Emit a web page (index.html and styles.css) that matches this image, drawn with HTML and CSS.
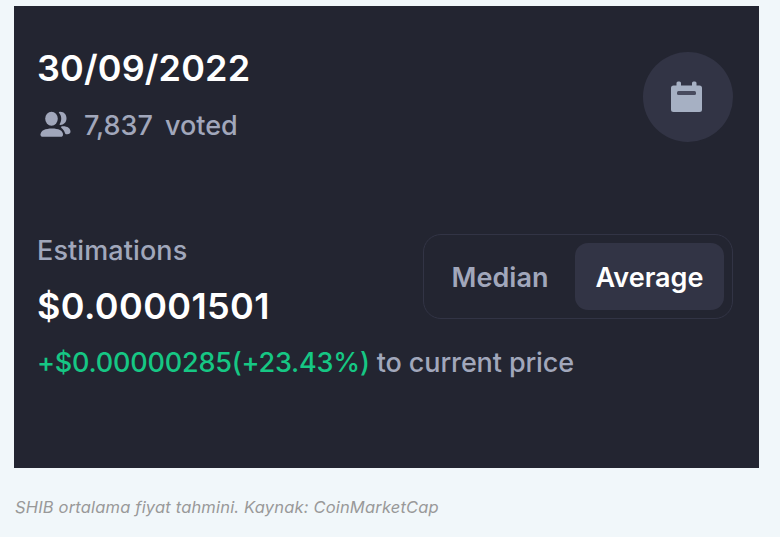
FILE: index.html
```html
<!DOCTYPE html>
<html lang="tr">
<head>
  <meta charset="UTF-8">
  <meta name="viewport" content="width=device-width, initial-scale=1.0">
  <title>SHIB Fiyat Tahmini</title>
  <link rel="stylesheet" href="styles.css">
</head>
<body>

<figure class="figure">
  <div class="card">
    <div class="card-top">
      <div class="vote-info">
        <h2 class="date">30/09/2022</h2>
        <div class="voted">
          <svg class="users-icon" width="32" height="28" viewBox="0 0 32 28" fill="currentColor" aria-hidden="true">
            <ellipse cx="11.500" cy="7.800" rx="6.300" ry="7"/>
            <path d="M0.5 23.5C0.5 19.4 5.5 17.4 12 17.4s11 2 11 6.1c0 1.6-.8 2.3-2.4 2.3H3c-1.700 0-2.500-.7-2.500-2.300z"/>
            <path d="M19.300.9c4.200-.6 7.200 2.500 7.200 6.400 0 4.100-2.700 6.600-6.200 6.600-.6 0-1-.2-.8-.6 2.400-3.400 2.400-8.400-.4-11.400-.4-.5-.3-.9.2-1z"/>
            <path d="M22 15.200c5.300-.3 8.500 2 8.500 5.300 0 1.700-1.300 2.700-3.200 2.700h-1.300c-.7 0-.8-.4-1-.9-.6-2.300-1.500-3.700-3.500-5.300-.7-.6-.5-1.700.5-1.800z"/>
          </svg>
          <span class="vote-count">7,837</span>
          <span class="vote-label">voted</span>
        </div>
      </div>
      <button class="calendar-btn" type="button" aria-label="Calendar">
        <svg width="32" height="32" viewBox="0 0 32 32" aria-hidden="true">
          <path fill="#a6b0c3" d="M7 .5h1.500q1.500 0 1.500 1.500v2.500h11V2q0-1.500 1.500-1.500H24q1.500 0 1.500 1.500v2.500h3q2.500 0 2.500 2.500v21.500q0 2.500-2.500 2.500h-26Q0 31 0 28.500V7q0-2.500 2.500-2.500H5.500V2q0-1.500 1.500-1.500z"/>
          <rect x="6" y="10" width="19" height="4" rx="1.500" fill="#484b5e"/>
        </svg>
      </button>
    </div>

    <div class="card-bottom">
      <div class="estimation">
        <div class="estimation-label">Estimations</div>
        <div class="price">$0.00001501</div>
      </div>
      <div class="toggle">
        <button class="toggle-item" type="button">Median</button>
        <button class="toggle-item active" type="button">Average</button>
      </div>
    </div>
    <div class="change"><span class="change-up">+$0.00000285(+23.43%)</span> <span class="change-note">to current price</span></div>
  </div>
  <figcaption class="caption">SHIB ortalama fiyat tahmini. Kaynak: CoinMarketCap</figcaption>
</figure>

</body>
</html>
```
FILE: styles.css
```css
* {
  box-sizing: border-box;
}

body {
  margin: 0;
  background-color: #f1f7fa;
  font-family: Inter, sans-serif;
}

.figure {
  width: 745px;
  margin: 0 0 0 14px;
  padding-top: 6px;
}

.card {
  height: 462px;
  padding: 40px 26px 0 23px;
  background-color: #232531;
  color: #a1a7bb;
  font-size: 27px;
  font-weight: 500;
  white-space: nowrap;
}

.card-top {
  display: flex;
  justify-content: space-between;
  height: 182px;
}

.date {
  margin: 0;
  color: #fff;
  font-size: 36px;
  font-weight: 600;
  letter-spacing: 0.15px;
  line-height: 44px;
}

.voted {
  display: flex;
  align-items: center;
  height: 40px;
  margin-top: 15px;
}

.users-icon {
  margin-left: 3px;
}

.vote-count {
  margin-left: 12px;
}

.vote-label {
  margin-left: 12px;
}

.calendar-btn {
  display: flex;
  align-items: center;
  justify-content: center;
  width: 90px;
  height: 90px;
  margin-top: 6px;
  padding: 0 2px 0 0;
  border: 0;
  border-radius: 50%;
  background-color: #323445;
}

.card-bottom {
  display: flex;
  justify-content: space-between;
  height: 117px;
}

.estimation-label {
  margin-top: 5px;
  letter-spacing: 0.1px;
  line-height: 36px;
}

.price {
  margin-top: 15px;
  color: #fff;
  font-size: 36px;
  font-weight: 600;
  letter-spacing: 0.4px;
  line-height: 44px;
}

.toggle {
  display: flex;
  width: 310px;
  height: 85px;
  margin-top: 6px;
  padding: 8px;
  border: 1px solid #323445;
  border-radius: 18px;
}

.toggle-item {
  flex: 1;
  padding: 2px 7px 0 0;
  border: 0;
  border-radius: 13px;
  background: none;
  color: #a1a7bb;
  font: 600 27px Inter, sans-serif;
}

.toggle-item.active {
  flex: 0 0 149px;
  padding-right: 0;
  background-color: #323445;
  color: #fff;
}

.change {
  letter-spacing: -0.12px;
  line-height: 36px;
}

.change-up {
  color: #16c784;
  letter-spacing: -0.2px;
}

.caption {
  margin-top: 29px;
  padding-left: 1px;
  color: #999;
  font-size: 16.5px;
  font-style: italic;
  letter-spacing: 0.18px;
  line-height: 20px;
}
```
